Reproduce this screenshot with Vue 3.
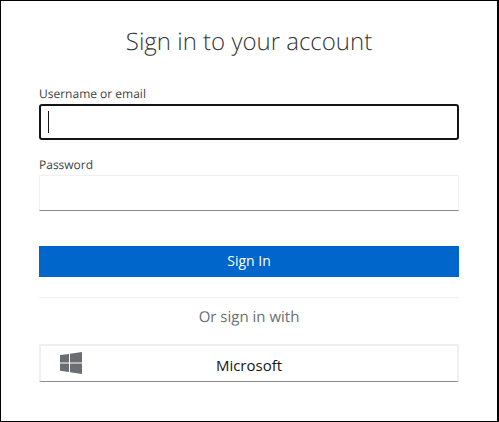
<script setup>
const title = 'Sign in to your account'
</script>

<template>
  <main class="card">
    <h1 class="title">{{ title }}</h1>
    <form class="form" @submit.prevent>
      <div class="field first">
        <label class="label">Username or email</label>
        <div class="input focused"><span class="caret"></span></div>
      </div>
      <div class="field second">
        <label class="label">Password</label>
        <div class="input"></div>
      </div>
      <button class="submit" type="button">Sign In</button>
    </form>
    <div class="divider"></div>
    <p class="alt">Or sign in with</p>
    <button class="provider" type="button">
      <svg class="win" viewBox="0 0 22 22" width="22" height="22" aria-hidden="true">
        <path fill="#6a6e73" d="M0 3.1 9 1.9V10.4H0ZM10 1.75 22 0V10.4H10ZM0 11.4H9V20L0 18.8ZM10 11.4H22V22L10 20.2Z" />
      </svg>
      <span class="provider-text">Microsoft</span>
    </button>
  </main>
</template>

<style scoped>
.card {
  box-sizing: border-box;
  width: 499px;
  height: 422px;
  border: 1px solid #000;
  border-right-width: 2px;
  padding: 0 38px;
  background: #fff;
  font-family: "Open Sans", sans-serif;
  text-rendering: geometricPrecision;
  display: flex;
  flex-direction: column;
}
.title {
  margin: 24px 0 0;
  font-size: 24px;
  font-weight: 300;
  line-height: 33px;
  text-align: center;
  color: #33363a;
}
.form {
  display: flex;
  flex-direction: column;
}
.first { margin-top: 26px; }
.second { margin-top: 15px; }
.label {
  display: block;
  font-size: 12px;
  line-height: 20px;
  color: #3c3f42;
  height: 20px;
}
.input {
  box-sizing: border-box;
  height: 36px;
  border: 1px solid #f0f0f0;
  border-bottom-color: #8a8d90;
  background: #fff;
}
.focused {
  position: relative;
  border: 2px solid #151515;
  border-radius: 3px;
}
.caret {
  position: absolute;
  left: 7px;
  top: 5px;
  width: 1px;
  height: 22px;
  background: #151515;
}
.submit {
  margin-top: 35px;
  height: 31px;
  border: 0;
  background: #06c;
  color: #fff;
  font: 400 14px "Open Sans", sans-serif;
  padding: 0 0 2px;
}
.divider {
  margin-top: 20px;
  height: 1px;
  background: #f0f0f0;
}
.alt {
  margin: 9px 0 0;
  font-size: 15px;
  line-height: 20px;
  text-align: center;
  color: #6a6e73;
}
.provider {
  margin-top: 17px;
  box-sizing: border-box;
  height: 38px;
  width: 100%;
  position: relative;
  display: flex;
  align-items: center;
  justify-content: center;
  background: #fff;
  border: 2px solid #f0f0f0;
  border-bottom: 1px solid #8a8d90;
  padding: 2px 0 0;
  font: 400 15px "Open Sans", sans-serif;
  color: #151515;
}
.win {
  position: absolute;
  left: 19px;
  top: 6px;
}
</style>
<style>
html, body { margin: 0; background: #fff; }
</style>
